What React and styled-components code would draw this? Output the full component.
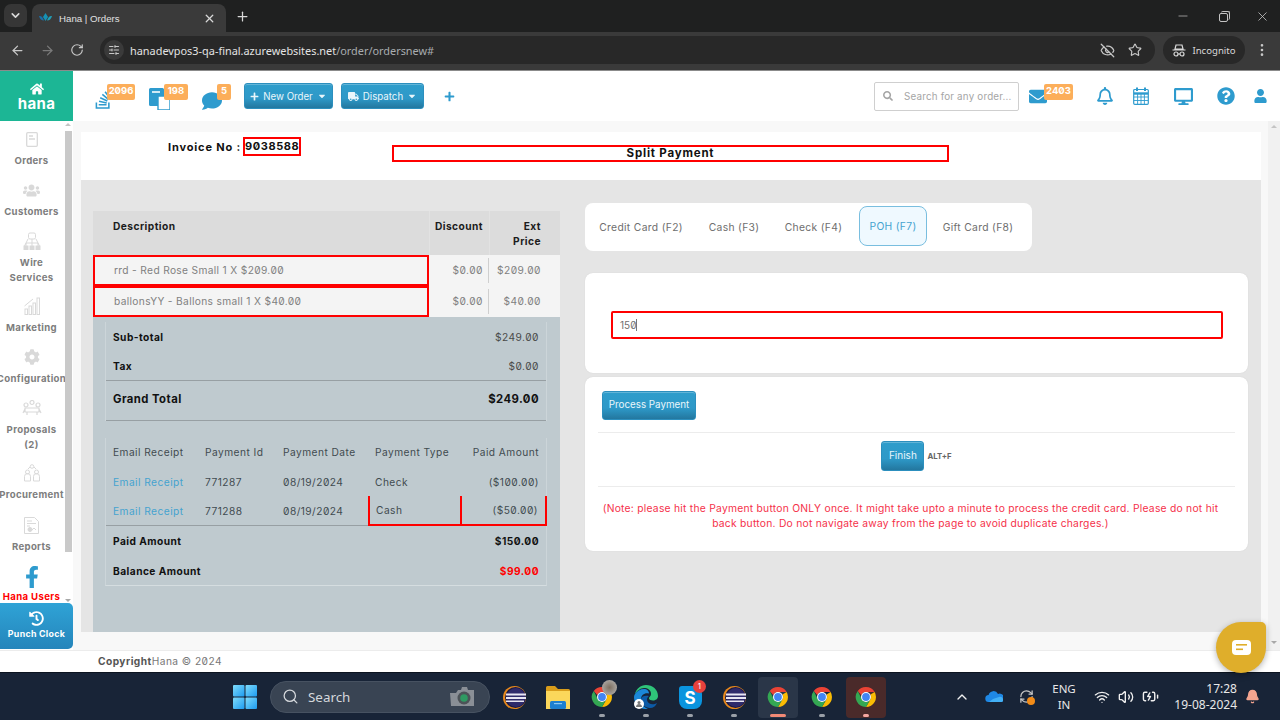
import React from "react";
import styled, { createGlobalStyle } from "styled-components";
import {
  ChevronDown,
  X,
  Plus,
  ArrowLeft,
  ArrowRight,
  RotateCw,
  SlidersHorizontal,
  EyeOff,
  Star,
  MoreVertical,
  Minus,
  Search as SearchLine,
  ChevronUp,
  Wifi,
  Volume2,
  BatteryCharging,
  Bell as BellFill,
  RefreshCw,
} from "lucide-react";
import {
  FaHome,
  FaStackOverflow,
  FaComment,
  FaPlus,
  FaCaretDown,
  FaTruck,
  FaSearch,
  FaEnvelope,
  FaRegBell,
  FaDesktop,
  FaQuestionCircle,
  FaUser,
  FaFacebookF,
  FaHistory,
  FaUsers,
  FaCog,
} from "react-icons/fa";

const Global = createGlobalStyle`
  html, body { margin: 0; padding: 0; height: 100%; overflow: hidden; }
  body { font-family: Inter, "Liberation Sans", sans-serif; font-feature-settings: "zero"; }
  #root { height: 720px; }
  * { box-sizing: border-box; }
`;

const Screen = styled.div`
  position: relative;
  width: 1280px;
  height: 720px;
  display: flex;
  flex-direction: column;
  overflow: hidden;
`;

/* browser chrome */
const TabStrip = styled.div`
  height: 32px;
  background: #1f2020;
  display: flex;
  align-items: flex-end;
  color: #d8d8d8;
  padding-left: 4px;
`;
const TabMenu = styled.div`
  width: 23px;
  height: 23px;
  margin: 0 5px 5px 0;
  border-radius: 7px;
  background: #363636;
  display: flex;
  align-items: center;
  justify-content: center;
`;
const Tab = styled.div`
  width: 194px;
  height: 28px;
  background: #3a3a3a;
  border-radius: 8px 8px 0 0;
  display: flex;
  align-items: center;
  padding: 0 10px 0 7px;
  font: 9.7px "Liberation Sans", sans-serif;
  gap: 7px;
`;
const TabTitle = styled.span`
  flex: 1;
  color: #e0e0e0;
`;
const NewTab = styled.div`
  margin: 0 0 8px 9px;
  display: flex;
`;
const WindowButtons = styled.div`
  margin-left: auto;
  display: flex;
  align-self: center;
  gap: 27px;
  padding-right: 10px;
  color: #c4c4c4;
`;
const Restore = styled.div`
  position: relative;
  width: 9px;
  height: 9px;
  border: 1px solid #c4c4c4;
  border-radius: 2px;
  margin: 4px 0 0 2px;
  &::after {
    content: "";
    position: absolute;
    top: -3px;
    right: -3px;
    width: 8px;
    height: 8px;
    border-top: 1px solid #c4c4c4;
    border-right: 1px solid #c4c4c4;
    border-radius: 2px;
  }
`;
const ToolBar = styled.div`
  height: 39px;
  background: #3a3a3a;
  border-bottom: 1px solid #8b8b8b;
  display: flex;
  align-items: center;
  padding: 0 7px 2px 10px;
  color: #c8c8c8;
`;
const NavIcons = styled.div`
  display: flex;
  gap: 15px;
  width: 90px;
`;
const UrlBar = styled.div`
  width: 1055px;
  height: 28px;
  border-radius: 14px;
  background: #282828;
  display: flex;
  align-items: center;
  padding: 0 13px 0 4px;
  gap: 6px;
`;
const UrlBadge = styled.div`
  width: 20px;
  height: 20px;
  border-radius: 50%;
  background: #3a3a3a;
  display: flex;
  align-items: center;
  justify-content: center;
`;
const UrlText = styled.div`
  flex: 1;
  font: 10.9px "Noto Sans", sans-serif;
  color: #a9adb0;
  b {
    font-weight: 400;
    color: #e3e3e3;
  }
`;
const UrlIcons = styled.div`
  display: flex;
  align-items: center;
  gap: 13px;
`;
const Incognito = styled.div`
  margin-left: 8px;
  width: 82px;
  height: 28px;
  border-radius: 14px;
  background: #282828;
  display: flex;
  align-items: center;
  justify-content: center;
  gap: 6px;
  font: 9.6px "Noto Sans", sans-serif;
  color: #d8d8d8;
`;
const Kebab = styled.div`
  margin-left: 9px;
  display: flex;
`;

/* app header */
const Header = styled.header`
  height: 50px;
  background: #fff;
  display: flex;
  align-items: center;
  flex: none;
`;
const Logo = styled.div`
  width: 73px;
  height: 50px;
  background: #1cb695;
  color: #fff;
  display: flex;
  flex-direction: column;
  align-items: center;
  justify-content: center;
  font-weight: 700;
  font-size: 15px;
  letter-spacing: 0.3px;
  line-height: 16px;
  padding-top: 1px;
`;
const HeaderIcon = styled.div`
  position: relative;
  display: flex;
  align-items: center;
  justify-content: center;
  align-self: ${(p) => (p.$top !== undefined ? "flex-start" : "center")};
  width: ${(p) => p.$w}px;
  margin-top: ${(p) => p.$top || 0}px;
  margin-left: ${(p) => p.$ml}px;
  margin-right: ${(p) => p.$mr || 0}px;
  color: #2e9bce;
`;
const Badge = styled.span`
  position: absolute;
  top: ${(p) => p.$top}px;
  left: ${(p) => p.$left}px;
  width: ${(p) => p.$w}px;
  height: 16px;
  border-radius: 2px;
  background: #fcae5a;
  color: #fff;
  font-size: 9.5px;
  font-weight: 700;
  line-height: 14px;
  text-align: center;
`;
const BlueButton = styled.button`
  height: ${(p) => p.$h}px;
  padding: 0 0 ${(p) => p.$pb || 0}px;
  width: ${(p) => p.$w}px;
  margin-left: ${(p) => p.$ml || 0}px;
  border: 1px solid #2c8fbe;
  border-radius: 3px;
  background: linear-gradient(#2f9dcb, #2e99c8 60%, #23779f);
  box-shadow: inset 0 1px 0 rgba(255, 255, 255, 0.25);
  color: #eaf6fb;
  font-family: inherit;
  font-size: ${(p) => p.$fs || 9.7}px;
  display: inline-flex;
  align-items: center;
  justify-content: center;
  gap: 4px;
`;
const SearchBox = styled.div`
  width: 145px;
  height: 29px;
  margin-left: auto;
  border: 1px solid #cfcfcf;
  border-radius: 2px;
  display: flex;
  align-items: center;
  padding-left: 8px;
  gap: 11px;
  color: #a5a5a5;
  font-size: 9.8px;
  letter-spacing: 0.2px;
`;

/* body */
const Body = styled.div`
  flex: 1;
  display: flex;
  min-height: 0;
`;
const Sidebar = styled.aside`
  position: relative;
  width: 73px;
  background: #fff;
  overflow: hidden;
  flex: none;
  display: flex;
  flex-direction: column;
`;
const SideList = styled.div`
  width: 63px;
  height: 482px;
  padding-top: 8px;
  display: flex;
  flex-direction: column;
`;
const SideItem = styled.div`
  display: flex;
  flex-direction: column;
  align-items: center;
  height: ${(p) => p.$h}px;
  color: #d9d9d9;
  flex: none;
`;
const SideIconBox = styled.div`
  height: 20px;
  display: flex;
  align-items: center;
  justify-content: center;
  margin-bottom: 5px;
`;
const SideLabel = styled.span`
  font-size: 9.6px;
  font-weight: 700;
  color: ${(p) => p.$color || "#7d7d7d"};
  line-height: 14.5px;
  letter-spacing: 0.35px;
  text-align: center;
  white-space: nowrap;
`;
const SideThumb = styled.div`
  position: absolute;
  left: 65px;
  top: 10px;
  width: 7px;
  height: 421px;
  background: #c9c9c9;
`;
const ScrollArrow = styled.span`
  position: absolute;
  left: ${(p) => p.$left}px;
  ${(p) => (p.$down ? `bottom: ${p.$at}px;` : `top: ${p.$at}px;`)}
  width: 0;
  height: 0;
  border-left: 3px solid transparent;
  border-right: 3px solid transparent;
  ${(p) => (p.$down ? "border-top: 3px solid #a8a8a8;" : "border-bottom: 3px solid #c4c4c4;")}
`;
const FbIcon = styled.div`
  color: #2e9bce;
  height: 26px;
  display: flex;
  align-items: center;
  justify-content: center;
`;
const PunchClock = styled.div`
  margin-top: auto;
  height: 46px;
  width: 73px;
  margin-bottom: 1px;
  border-radius: 0 5px 5px 0;
  background: linear-gradient(#2fa3d6, #2585bb);
  color: #fff;
  display: flex;
  flex-direction: column;
  align-items: center;
  justify-content: center;
  font-size: 8.8px;
  font-weight: 700;
  letter-spacing: 0.3px;
  gap: 2px;
  padding-bottom: 2px;
`;
const Main = styled.main`
  flex: 1;
  position: relative;
  background: #f8f8f8;
  display: flex;
  flex-direction: column;
  min-width: 0;
`;
const ScrollTrack = styled.div`
  position: absolute;
  right: 0;
  top: 0;
  bottom: 0;
  width: 12px;
  background: #f1f1f1;
`;
const Panel = styled.div`
  width: 1180px;
  margin: 11px 0 18px 8px;
  flex: 1;
  display: flex;
  flex-direction: column;
`;
const InvoiceBar = styled.div`
  height: 48px;
  background: #fff;
  display: flex;
  align-items: flex-start;
  flex: none;
  font-weight: 700;
  color: #111;
`;
const InvoiceLabel = styled.span`
  margin: 8px 0 0 87px;
  font-size: 11px;
  letter-spacing: 0.85px;
  line-height: 14px;
  width: 75px;
  white-space: nowrap;
`;
const InvoiceNo = styled.span`
  border: 2px solid #f00;
  margin: 5px 0 0 0;
  width: 58px;
  height: 19px;
  font-size: 11px;
  letter-spacing: 0.6px;
  line-height: 15px;
  text-align: center;
`;
const SplitTitle = styled.div`
  border: 2px solid #f00;
  width: 557px;
  height: 17px;
  margin: 13px 0 0 91px;
  font-size: 11.5px;
  letter-spacing: 0.8px;
  line-height: 13px;
  text-align: center;
`;
const Content = styled.div`
  flex: 1;
  background: #e5e5e5;
  display: flex;
  align-items: flex-start;
  padding-left: 12px;
`;

/* left column */
const LeftCol = styled.section`
  width: 467px;
  margin-top: 31px;
  height: 421px;
  background: #bfcacf;
  font-size: 10.2px;
  letter-spacing: 0.45px;
`;
const ItemHead = styled.div`
  display: grid;
  grid-template-columns: 336px 60px 71px;
  height: 44px;
  background: #dcdcdc;
  font-weight: 700;
  color: #1c1c1c;
  line-height: 15px;
`;
const HeadCell = styled.div`
  padding: 8px ${(p) => p.$pr || 0}px 0 ${(p) => p.$pl || 0}px;
  text-align: ${(p) => (p.$pl ? "left" : "right")};
  border-left: ${(p) => (p.$pl ? "none" : "1px solid #e2e2e2")};
`;
const ItemRow = styled.div`
  display: grid;
  grid-template-columns: 336px 60px 71px;
  height: 31px;
  background: #f4f4f4;
  color: #808080;
`;
const DescCell = styled.div`
  border: 2px solid #f00;
  display: flex;
  align-items: center;
  padding: 0 0 2px 19px;
  letter-spacing: 0.34px;
`;
const NumCell = styled.div`
  display: flex;
  align-items: center;
  justify-content: flex-end;
  padding: 0 ${(p) => p.$pr}px 2px 0;
  position: relative;
  &::after {
    content: "";
    display: ${(p) => (p.$sep ? "block" : "none")};
    position: absolute;
    right: 0;
    top: 3px;
    bottom: 3px;
    width: 1px;
    background: #cfcfcf;
  }
`;
const Totals = styled.div`
  margin: 5px 13px 0 12px;
  border-left: 1px solid #ccd5d9;
  border-right: 1px solid #ccd5d9;
`;
const TotalRow = styled.div`
  display: flex;
  justify-content: space-between;
  align-items: center;
  height: ${(p) => p.$h}px;
  padding: ${(p) => p.$pad || "0 7px"};
  border-bottom: ${(p) => (p.$line ? "1px solid #979fa3" : "none")};
  color: #4a4a4a;
  font-size: ${(p) => (p.$big ? 11.3 : 10.2)}px;
  font-weight: ${(p) => (p.$big ? 700 : 400)};
  ${(p) => p.$big && "color: #111;"}
  b {
    color: #111;
    font-weight: 700;
  }
`;
const Balance = styled.b`
  && {
    color: #f00;
  }
`;
const Payments = styled.div`
  margin: 17px 13px 0 12px;
  border-left: 1px solid #ccd5d9;
  border-right: 1px solid #ccd5d9;
  border-bottom: 1px solid #d5dde0;
`;
const PayRow = styled.div`
  display: grid;
  grid-template-columns: 92px 78px 92px 92px 86px;
  height: ${(p) => p.$h}px;
  padding-bottom: ${(p) => p.$pb || 0}px;
  border-bottom: ${(p) => (p.$line ? "1px solid #979fa3" : "none")};
  color: #3f4a50;
`;
const PayCell = styled.div`
  display: flex;
  align-items: center;
  white-space: nowrap;
  padding-left: 7px;
  justify-content: ${(p) => (p.$right ? "flex-end" : "flex-start")};
  ${(p) => p.$right && "padding: 0 7px 0 0;"}
  color: ${(p) => (p.$link ? "#45a3cf" : "inherit")};
  ${(p) => p.$red && "border-left: 2px solid #f00; border-bottom: 2px solid #f00; margin-bottom: -1px;"}
  ${(p) => p.$red && !p.$right && "padding-left: 6px;"}
  ${(p) => p.$redEnd && "border-right: 2px solid #f00; margin-right: -1px;"}
`;

/* right column */
const RightCol = styled.section`
  margin-left: 25px;
  width: 663px;
  display: flex;
  flex-direction: column;
`;
const Tabs = styled.div`
  margin-top: 23px;
  width: 447px;
  height: 48px;
  background: #fff;
  border-radius: 8px;
  display: flex;
  align-items: flex-start;
  padding: 3px 0 0 3px;
  font-size: 10.3px;
  letter-spacing: 0.33px;
  color: #6e6e6e;
`;
const PayTab = styled.div`
  width: ${(p) => p.$w}px;
  height: 40px;
  margin-right: ${(p) => p.$mr || 0}px;
  display: flex;
  align-items: center;
  justify-content: center;
  padding-top: ${(p) => (p.$active ? 0 : 2)}px;
  padding-bottom: ${(p) => (p.$active ? 1 : 0)}px;
  border-radius: 8px;
  ${(p) =>
    p.$active &&
    "background: #eff9ff; border: 1px solid #79bedf; color: #45a3cf;"}
`;
const Card = styled.div`
  background: #fff;
  border-radius: 8px;
  box-shadow: 0 0 1px #c8c8c8;
  height: ${(p) => p.$h}px;
  margin-top: ${(p) => p.$mt}px;
  padding: ${(p) => p.$pad};
`;
const AmountInput = styled.div`
  width: 612px;
  height: 28px;
  border: 2px solid #f00;
  border-radius: 2px;
  display: flex;
  align-items: center;
  padding-left: 7px;
  font-size: 10px;
  color: #707070;
`;
const Caret = styled.span`
  width: 1px;
  height: 12px;
  background: #777;
`;
const Rule = styled.div`
  height: 1px;
  background: #ececec;
  margin: ${(p) => p.$m};
`;
const FinishRow = styled.div`
  display: flex;
  align-items: center;
  justify-content: center;
  gap: 2px;
`;
const Shortcut = styled.span`
  font-size: 7.8px;
  font-weight: 700;
  color: #666;
  margin-left: 1px;
`;
const Note = styled.p`
  margin: 14px 0 0;
  padding-right: 12px;
  font-size: 10.3px;
  line-height: 14.5px;
  letter-spacing: 0.25px;
  color: #f5314a;
  text-align: center;
`;

/* footer */
const Footer = styled.footer`
  height: 22px;
  background: #fff;
  border-top: 1px solid #ececec;
  padding: 0 0 1px 98px;
  display: flex;
  align-items: center;
  font-size: 10.2px;
  letter-spacing: 0.45px;
  color: #777;
  flex: none;
  b {
    color: #555;
  }
`;
const ChatBubble = styled.div`
  position: absolute;
  left: 1216px;
  top: 622px;
  width: 50px;
  height: 51px;
  border-radius: 50% 5px 50% 50%;
  background: #dfae2b;
  box-shadow: 0 2px 6px rgba(0, 0, 0, 0.3);
  display: flex;
  align-items: center;
  justify-content: center;
`;

/* taskbar */
const Taskbar = styled.div`
  height: 48px;
  flex: none;
  background: #182437;
  border-top: 1px solid #0c1420;
  display: flex;
  align-items: center;
  padding-left: 233px;
  color: #e8e8e8;
`;
const SearchPill = styled.div`
  width: 220px;
  height: 32px;
  margin: 0 2px 0 13px;
  border-radius: 16px;
  background: #394453;
  border: 1px solid #475261;
  display: flex;
  align-items: center;
  padding: 0 15px 0 11px;
  gap: 9px;
  font: 13.4px "Noto Sans", sans-serif;
  color: #d5d8dc;
`;
const PillText = styled.span`
  flex: 1;
`;
const AppSlot = styled.div`
  position: relative;
  width: 40px;
  height: 41px;
  display: flex;
  align-items: center;
  justify-content: center;
  border-radius: 4px;
  margin: 1px 2px 0;
  background: ${(p) => p.$bg || "transparent"};
  &::after {
    content: "";
    display: ${(p) => (p.$dot ? "block" : "none")};
    position: absolute;
    bottom: 1px;
    left: 50%;
    transform: translateX(-50%);
    width: ${(p) => p.$dotW || 6}px;
    height: 3px;
    border-radius: 2px;
    background: ${(p) => p.$dot};
  }
`;
const SkypeDot = styled.span`
  position: absolute;
  top: 3px;
  right: 4px;
  width: 13px;
  height: 13px;
  border-radius: 50%;
  background: #e8413c;
  color: #fff;
  font-size: 8px;
  text-align: center;
  line-height: 13px;
`;
const Avatar = styled.span`
  position: absolute;
  top: 3px;
  right: 5px;
  width: 15px;
  height: 15px;
  border-radius: 50%;
  background: radial-gradient(#7d6f60, #b9b9b9);
`;
const Tray = styled.div`
  margin-left: auto;
  padding-right: 16px;
  display: flex;
  align-items: center;
  font: 11.5px "Noto Sans", sans-serif;
`;
const TrayIcon = styled.div`
  position: relative;
  display: flex;
  width: ${(p) => p.$w}px;
  justify-content: center;
  color: #f0f0f0;
`;
const SyncDot = styled.span`
  position: absolute;
  right: 1px;
  bottom: -1px;
  width: 8px;
  height: 8px;
  border-radius: 50%;
  background: #f28c18;
`;
const Lang = styled.div`
  width: 44px;
  margin: 0 0 0 6px;
  text-align: center;
  line-height: 16px;
`;
const Clock = styled.div`
  width: 70px;
  text-align: right;
  font-size: 12px;
  line-height: 16px;
  margin: 0 3px 0 1px;
`;

const CopyIcon = () => (
  <svg width="21" height="22" viewBox="0 0 21 22">
    <path d="M0 1.5A1.5 1.5 0 0 1 1.5 0h12A1.5 1.5 0 0 1 15 1.5V18H1.5A1.5 1.5 0 0 1 0 16.5z" fill="#2e9bce" />
    <rect x="3" y="3" width="8" height="2" fill="#cfe9f5" />
    <path d="M9 8h8l4 4v10H9z" fill="#fff" stroke="#2e9bce" strokeWidth="1.4" />
  </svg>
);

const CalendarIcon = () => (
  <svg width="16" height="18" viewBox="0 0 16 18" fill="none" stroke="#2e9bce">
    <rect x="0.7" y="2.5" width="14.6" height="14.8" rx="1" strokeWidth="1.2" />
    <path d="M1 6.5h14" strokeWidth="2.4" />
    <path d="M1 10h14M1 13.5h14M4.6 7v10M8 7v10M11.4 7v10" strokeWidth="0.9" />
    <path d="M4 0.5v3.5M12 0.5v3.5" strokeWidth="2" />
  </svg>
);

const FavIcon = () => (
  <svg width="13" height="10" viewBox="0 0 13 10">
    <path d="M6.5 0 9 4 6.5 8 4 4z" fill="#1592b5" />
    <path d="M0 3c2-.5 3.6.6 5 4.600-2.400 0-4.200-1.600-5-4.600z" fill="#1b6fa8" />
    <path d="M13 3c-2-.5-3.600.6-5 4.600 2.400 0 4.200-1.600 5-4.600z" fill="#20a0b8" />
  </svg>
);

const SpyIcon = () => (
  <svg width="14" height="13" viewBox="0 0 14 13" fill="none" stroke="#d8d8d8" strokeWidth="1.2">
    <path d="M4 1h6l1 4H3zM0.500 6h13" />
    <circle cx="4" cy="10" r="2" />
    <circle cx="10" cy="10" r="2" />
    <path d="M6 10h2" />
  </svg>
);

// sidebar drawings, all in the same pale grey
const DocIcon = () => (
  <svg width="12" height="15" viewBox="0 0 12 15" fill="none" stroke="#d9d9d9" strokeWidth="1.3">
    <rect x="0.700" y="0.700" width="10.600" height="13.600" rx="1" />
    <path d="M3 4h4M3 7h6" />
  </svg>
);
const NetworkIcon = () => (
  <svg width="18" height="18" viewBox="0 0 18 18" fill="none" stroke="#d9d9d9" strokeWidth="1">
    <rect x="5.500" y="1" width="7" height="6" rx="1.500" />
    <path d="M9 7v4M3 14v-3h12v3M9 11v3M5 7 1.500 14M13 7l3.500 7" />
    <rect x="1" y="14" width="4" height="3.500" fill="#d9d9d9" />
    <rect x="7" y="14" width="4" height="3.500" fill="#d9d9d9" />
    <rect x="13" y="14" width="4" height="3.500" fill="#d9d9d9" />
  </svg>
);
const ChartIcon = () => (
  <svg width="16" height="18" viewBox="0 0 16 18" fill="none" stroke="#d9d9d9" strokeWidth="1">
    <rect x="1" y="12" width="2.500" height="5.500" />
    <rect x="5" y="9" width="2.500" height="8.500" />
    <rect x="9" y="6" width="2.500" height="11.500" />
    <rect x="13" y="1" width="2.500" height="16.500" />
    <path d="M0.500 9 9 2" />
  </svg>
);
const GroupIcon = () => (
  <svg width="20" height="16" viewBox="0 0 20 16" fill="none" stroke="#d9d9d9" strokeWidth="1.200">
    <circle cx="4" cy="5" r="2" />
    <circle cx="10" cy="2.500" r="2" />
    <circle cx="16" cy="5" r="2" />
    <path d="M3 8h14v4H3zM5 12v3M15 12v3M1 13l2-4M19 13l-2-4" />
  </svg>
);
const TeamIcon = () => (
  <svg width="18" height="18" viewBox="0 0 18 18" fill="none" stroke="#d9d9d9" strokeWidth="1">
    <circle cx="9" cy="2.500" r="1.800" />
    <circle cx="4.500" cy="8" r="2" />
    <circle cx="13.500" cy="8" r="2" />
    <path d="M1.500 17v-4.500a3 3 0 0 1 6 0V17zM10.500 17v-4.500a3 3 0 0 1 6 0V17zM5 5l2-2M13 5l-2-2" />
  </svg>
);
const ReportIcon = () => (
  <svg width="15" height="17" viewBox="0 0 15 17" fill="none" stroke="#d9d9d9" strokeWidth="1">
    <path d="M.5.500h10l4 4v12H.500z" />
    <path d="M3 4h5M3 6.500h9M3 9h3" />
    <circle cx="6" cy="12.500" r="2" fill="#d9d9d9" />
    <path d="M8 13l2-2 2 2" />
  </svg>
);

const WindowsLogo = () => (
  <svg width="24" height="24" viewBox="0 0 24 24">
    <defs>
      <linearGradient id="winA" x1="0" y1="0" x2="1" y2="1">
        <stop offset="0" stopColor="#7fdcfb" />
        <stop offset="1" stopColor="#1d9bf0" />
      </linearGradient>
    </defs>
    <rect x="0" y="0" width="11.500" height="11.500" rx="1" fill="url(#winA)" />
    <rect x="12.500" y="0" width="11.500" height="11.500" rx="1" fill="url(#winA)" />
    <rect x="0" y="12.500" width="11.500" height="11.500" rx="1" fill="url(#winA)" />
    <rect x="12.500" y="12.500" width="11.500" height="11.500" rx="1" fill="url(#winA)" />
  </svg>
);

const CameraIcon = () => (
  <svg width="24" height="20" viewBox="0 0 24 20">
    <path d="M0 6h6l2-3h3l1-3h5l1 3h6v16H1z" fill="#8a8f96" />
    <circle cx="14" cy="11" r="6.500" fill="#4d5358" />
    <circle cx="14" cy="11" r="3.800" fill="#2f9a62" />
  </svg>
);

const EclipseIcon = () => (
  <svg width="23" height="23" viewBox="0 0 23 23">
    <circle cx="11.500" cy="11.500" r="11.500" fill="#e8891c" />
    <circle cx="12.500" cy="11.500" r="10.500" fill="#1b1a45" />
    <circle cx="13" cy="11.500" r="9.500" fill="#2e2a6b" />
    <rect x="3" y="7.500" width="20" height="2" fill="#e8e6f2" />
    <rect x="3" y="11" width="20" height="2" fill="#e8e6f2" />
    <rect x="3" y="14.500" width="18" height="1.500" fill="#e8e6f2" />
  </svg>
);

const FolderIcon = () => (
  <svg width="24" height="23" viewBox="0 0 24 23">
    <path d="M0 1.500A1.500 1.500 0 0 1 1.500 0H9l3 3h10.500A1.500 1.500 0 0 1 24 4.500V8H0z" fill="#d99d1b" />
    <path d="M0 5h24v18H0z" fill="#fbd75b" />
    <rect x="4" y="15" width="16" height="8" rx="1.500" fill="#1c7fd0" />
    <rect x="8" y="17" width="8" height="1.200" fill="#8bc8f2" />
  </svg>
);

const ChromeIcon = () => (
  <svg width="24" height="24" viewBox="0 0 48 48">
    <path d="M24 4a20 20 0 0 1 17.300 10H24a10 10 0 0 0-9.400 6.500L7.500 12A20 20 0 0 1 24 4z" fill="#ea4335" />
    <path d="M41.300 14A20 20 0 0 1 24 44l8.600-15A10 10 0 0 0 33 19z" fill="#fbbc04" />
    <path d="M7.500 12 16 29a10 10 0 0 0 16.600 0L24 44A20 20 0 0 1 7.500 12z" fill="#34a853" />
    <circle cx="24" cy="24" r="10" fill="#fff" />
    <circle cx="24" cy="24" r="7.800" fill="#4285f4" />
  </svg>
);

const EdgeIcon = () => (
  <svg width="24" height="24" viewBox="0 0 24 24">
    <path d="M12 0c6.500 0 12 4.500 12 11 0 3-2.500 4.500-5 4.500-2 0-4-.8-4-2 0-2 2-1.500 2-5S13.500 3 10 3 3 6 1 9c1-5 5.500-9 11-9z" fill="#2fc47a" />
    <path d="M1 9c2-3 5-5 9-5 3 0 5 2 5 4.500-4-1-8 1-8 6 0 4 3 8 7 9.500-7 1-14-4-14-12 0-1 .3-2 1-3z" fill="#1b88d8" />
    <path d="M7 14.500C7 19 11 23 16 23c3 0 6-2 7-5-3 2-9 2-10-3 0-2 .5-3 2-4-4-1-8 0-8 3.500z" fill="#0c5aa6" />
    <circle cx="5" cy="19" r="5" fill="#fff" />
    <circle cx="5" cy="17.500" r="1.500" fill="#777" />
    <path d="M2 22c0-2 1.500-3 3-3s3 1 3 3z" fill="#777" />
  </svg>
);

const SkypeIcon = () => (
  <svg width="23" height="23" viewBox="0 0 23 23">
    <path d="M0 3a3 3 0 0 1 3-3h12a8 8 0 0 1 8 8v7a8 8 0 0 1-8 8H8a8 8 0 0 1-8-8z" fill="#0a94de" />
    <text x="11" y="18" fontSize="17" fontWeight="700" fill="#fff" textAnchor="middle" fontFamily="Inter, sans-serif">S</text>
  </svg>
);

const OneDrive = () => (
  <svg width="18" height="11" viewBox="0 0 18 11">
    <path d="M4 11a3.500 3.500 0 0 1-.4-7A5 5 0 0 1 13 3a4 4 0 0 1 3.500 8z" fill="#1e88e5" />
    <path d="M4 11h12.500A2 2 0 0 0 18 8c-.5-2-2.500-2.500-4-2L8 8z" fill="#43b0f5" />
  </svg>
);

const sideItems = [
  { label: "Orders", h: 51, icon: <DocIcon /> },
  { label: "Customers", h: 51, icon: <FaUsers size={17} /> },
  { label: "Wire", extra: "Services", h: 65, icon: <NetworkIcon /> },
  { label: "Marketing", h: 51, icon: <ChartIcon /> },
  { label: "Configuration", h: 51, icon: <FaCog size={16} /> },
  { label: "Proposals", extra: "(2)", h: 65, icon: <GroupIcon /> },
  { label: "Procurement", h: 52, icon: <TeamIcon /> },
  { label: "Reports", h: 49, icon: <ReportIcon /> },
];

const payments = [
  { id: "771287", date: "08/19/2024", type: "Check", amount: "($100.00)" },
  { id: "771288", date: "08/19/2024", type: "Cash", amount: "($50.00)", marked: true },
];

const App = () => (
  <Screen>
    <Global />
    <TabStrip>
      <TabMenu>
        <ChevronDown size={13} strokeWidth={3} />
      </TabMenu>
      <Tab>
        <FavIcon />
        <TabTitle>Hana | Orders</TabTitle>
        <X size={13} strokeWidth={2.4} />
      </Tab>
      <NewTab>
        <Plus size={15} strokeWidth={2} />
      </NewTab>
      <WindowButtons>
        <Minus size={14} strokeWidth={1.2} />
        <Restore />
        <X size={15} strokeWidth={1.3} />
      </WindowButtons>
    </TabStrip>
    <ToolBar>
      <NavIcons>
        <ArrowLeft size={15} />
        <ArrowRight size={15} color="#7a7a7a" />
        <RotateCw size={14} />
      </NavIcons>
      <UrlBar>
        <UrlBadge>
          <SlidersHorizontal size={12} />
        </UrlBadge>
        <UrlText>
          <b>hanadevpos3-qa-final.azurewebsites.net</b>/order/ordersnew#
        </UrlText>
        <UrlIcons>
          <EyeOff size={15} />
          <Star size={14} />
        </UrlIcons>
      </UrlBar>
      <Incognito>
        <SpyIcon />
        Incognito
      </Incognito>
      <Kebab>
        <MoreVertical size={16} />
      </Kebab>
    </ToolBar>

    <Header>
      <Logo>
        <FaHome size={14} />
        hana
      </Logo>
      <HeaderIcon $w={18} $ml={21} $top={19}>
        <FaStackOverflow size={20} />
        <Badge $left={13} $w={28} $top={-6}>2096</Badge>
      </HeaderIcon>
      <HeaderIcon $w={22} $ml={36} $top={17}>
        <CopyIcon />
        <Badge $left={16} $w={24} $top={-4}>198</Badge>
      </HeaderIcon>
      <HeaderIcon $w={20} $ml={32} $top={20}>
        <FaComment size={20} />
        <Badge $left={15} $w={14} $top={-7}>5</Badge>
      </HeaderIcon>
      <BlueButton $w={89} $h={26} $ml={22}>
        <FaPlus size={9} />
        New Order
        <FaCaretDown size={10} />
      </BlueButton>
      <BlueButton $w={83} $h={26} $ml={8}>
        <FaTruck size={11} />
        Dispatch
        <FaCaretDown size={10} />
      </BlueButton>
      <HeaderIcon $w={12} $ml={19}>
        <FaPlus size={11} />
      </HeaderIcon>
      <SearchBox>
        <FaSearch size={10} />
        Search for any order...
      </SearchBox>
      <HeaderIcon $w={18} $ml={10} $top={16}>
        <FaEnvelope size={19} />
        <Badge $left={15} $w={29} $top={-3}>2403</Badge>
      </HeaderIcon>
      <HeaderIcon $w={16} $ml={50}>
        <FaRegBell size={18} />
      </HeaderIcon>
      <HeaderIcon $w={16} $ml={20}>
        <CalendarIcon />
      </HeaderIcon>
      <HeaderIcon $w={19} $ml={25}>
        <FaDesktop size={19} />
      </HeaderIcon>
      <HeaderIcon $w={18} $ml={24}>
        <FaQuestionCircle size={18} />
      </HeaderIcon>
      <HeaderIcon $w={13} $ml={19} $mr={13}>
        <FaUser size={14} />
      </HeaderIcon>
    </Header>

    <Body>
      <Sidebar>
        <ScrollArrow $left={65} $at={2} />
        <ScrollArrow $left={65} $at={48} $down />
        <SideThumb />
        <SideList>
          {sideItems.map((item) => (
            <SideItem key={item.label} $h={item.h}>
              <SideIconBox>{item.icon}</SideIconBox>
              <SideLabel>{item.label}</SideLabel>
              {item.extra && <SideLabel>{item.extra}</SideLabel>}
            </SideItem>
          ))}
          <SideItem $h={40}>
            <FbIcon>
              <FaFacebookF size={22} />
            </FbIcon>
            <SideLabel $color="#f00">Hana Users</SideLabel>
          </SideItem>
        </SideList>
        <PunchClock>
          <FaHistory size={15} />
          Punch Clock
        </PunchClock>
      </Sidebar>

      <Main>
        <ScrollTrack />
        <ScrollArrow $left={1198} $at={4} />
        <ScrollArrow $left={1198} $at={6} $down />
        <Panel>
          <InvoiceBar>
            <InvoiceLabel>Invoice No :</InvoiceLabel>
            <InvoiceNo>9038588</InvoiceNo>
            <SplitTitle>Split Payment</SplitTitle>
          </InvoiceBar>
          <Content>
            <LeftCol>
              <ItemHead>
                <HeadCell $pl={20}>Description</HeadCell>
                <HeadCell $pr={6}>Discount</HeadCell>
                <HeadCell $pr={19}>
                  Ext
                  <br />
                  Price
                </HeadCell>
              </ItemHead>
              <ItemRow>
                <DescCell>rrd - Red Rose Small 1 X $209.00</DescCell>
                <NumCell $pr={6} $sep>$0.00</NumCell>
                <NumCell $pr={19}>$209.00</NumCell>
              </ItemRow>
              <ItemRow>
                <DescCell>ballonsYY - Ballons small 1 X $40.00</DescCell>
                <NumCell $pr={6} $sep>$0.00</NumCell>
                <NumCell $pr={19}>$40.00</NumCell>
              </ItemRow>
              <Totals>
                <TotalRow $h={30}>
                  <b>Sub-total</b>
                  <span>$249.00</span>
                </TotalRow>
                <TotalRow $h={29} $line>
                  <b>Tax</b>
                  <span>$0.00</span>
                </TotalRow>
                <TotalRow $h={40} $line $big $pad="0 7px 4px">
                  <span>Grand Total</span>
                  <span>$249.00</span>
                </TotalRow>
              </Totals>
              <Payments>
                <PayRow $h={29} $pb={2}>
                  <PayCell>Email Receipt</PayCell>
                  <PayCell>Payment Id</PayCell>
                  <PayCell>Payment Date</PayCell>
                  <PayCell>Payment Type</PayCell>
                  <PayCell $right>Paid Amount</PayCell>
                </PayRow>
                {payments.map((p) => (
                  <PayRow key={p.id} $h={p.marked ? 30 : 29} $line={p.marked}>
                    <PayCell $link>Email Receipt</PayCell>
                    <PayCell>{p.id}</PayCell>
                    <PayCell>{p.date}</PayCell>
                    <PayCell $red={p.marked}>{p.type}</PayCell>
                    <PayCell $right $red={p.marked} $redEnd={p.marked}>
                      {p.amount}
                    </PayCell>
                  </PayRow>
                ))}
                <TotalRow $h={30}>
                  <b>Paid Amount</b>
                  <b>$150.00</b>
                </TotalRow>
                <TotalRow $h={29}>
                  <b>Balance Amount</b>
                  <Balance>$99.00</Balance>
                </TotalRow>
              </Payments>
            </LeftCol>

            <RightCol>
              <Tabs>
                <PayTab $w={106}>Credit Card (F2)</PayTab>
                <PayTab $w={80}>Cash (F3)</PayTab>
                <PayTab $w={79} $mr={6}>Check (F4)</PayTab>
                <PayTab $w={68} $active>POH (F7)</PayTab>
                <PayTab $w={102}>Gift Card (F8)</PayTab>
              </Tabs>
              <Card $h={100} $mt={22} $pad="38px 0 0 26px">
                <AmountInput>
                  150
                  <Caret />
                </AmountInput>
              </Card>
              <Card $h={174} $mt={4} $pad="14px 13px 0">
                <BlueButton $w={94} $h={29} $ml={4} $fs={9.8} $pb={3}>Process Payment</BlueButton>
                <Rule $m="12px 0 8px" />
                <FinishRow>
                  <BlueButton $w={43} $h={30} $fs={10} $pb={2}>Finish</BlueButton>
                  <Shortcut>ALT+F</Shortcut>
                </FinishRow>
                <Rule $m="15px 0 0" />
                <Note>
                  (Note: please hit the Payment button ONLY once. It might take upto a minute to process the credit card. Please do not hit back button. Do not navigate away from the page to avoid duplicate charges.)
                </Note>
              </Card>
            </RightCol>
          </Content>
        </Panel>
      </Main>
    </Body>

    <Footer>
      <b>Copyright</b>Hana © 2024
    </Footer>

    <Taskbar>
      <WindowsLogo />
      <SearchPill>
        <SearchLine size={17} strokeWidth={1.8} />
        <PillText>Search</PillText>
        <CameraIcon />
      </SearchPill>
      <AppSlot><EclipseIcon /></AppSlot>
      <AppSlot><FolderIcon /></AppSlot>
      <AppSlot $dot="#9aa0a8">
        <ChromeIcon />
        <Avatar />
      </AppSlot>
      <AppSlot $dot="#9aa0a8"><EdgeIcon /></AppSlot>
      <AppSlot $dot="#9aa0a8">
        <SkypeIcon />
        <SkypeDot>1</SkypeDot>
      </AppSlot>
      <AppSlot $dot="#9aa0a8"><EclipseIcon /></AppSlot>
      <AppSlot $bg="#2a3648" $dot="#f28a76" $dotW={16}><ChromeIcon /></AppSlot>
      <AppSlot $dot="#9aa0a8"><ChromeIcon /></AppSlot>
      <AppSlot $bg="#4a2a2a" $dot="#f4a6a0"><ChromeIcon /></AppSlot>
      <Tray>
        <TrayIcon $w={20}><ChevronUp size={16} /></TrayIcon>
        <TrayIcon $w={44}><OneDrive /></TrayIcon>
        <TrayIcon $w={20}>
          <RefreshCw size={15} color="#c8c8c8" />
          <SyncDot />
        </TrayIcon>
        <Lang>ENG<br />IN</Lang>
        <TrayIcon $w={32}><Wifi size={16} /></TrayIcon>
        <TrayIcon $w={16}><Volume2 size={16} /></TrayIcon>
        <TrayIcon $w={32}><BatteryCharging size={17} /></TrayIcon>
        <Clock>17:28<br />19-08-2024</Clock>
        <TrayIcon $w={24}><BellFill size={15} fill="#f4a590" color="#f4a590" /></TrayIcon>
      </Tray>
    </Taskbar>

    <ChatBubble>
      <svg width="19" height="15" viewBox="0 0 19 15">
        <rect width="19" height="15" rx="4" fill="#fff" />
        <rect x="4" y="4" width="11" height="1.600" fill="#dfae2b" />
        <rect x="4" y="8.500" width="7" height="1.600" fill="#dfae2b" />
      </svg>
    </ChatBubble>
  </Screen>
);

export default App;
